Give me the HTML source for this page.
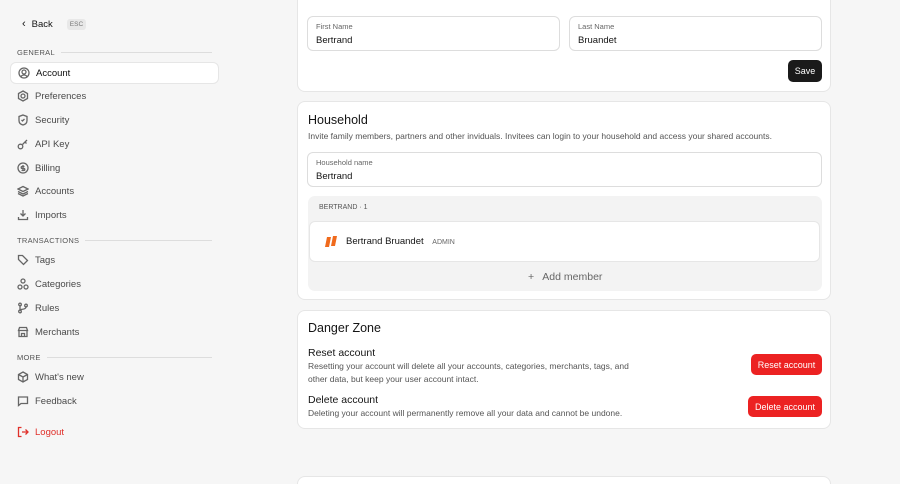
<!DOCTYPE html><html><head><style>
*{box-sizing:border-box;margin:0;padding:0}
html,body{width:900px;height:484px;overflow:hidden}
body{background:#f6f6f6;font-family:"Liberation Sans",sans-serif;color:#141414;position:relative}
.a{position:absolute}
.nav{left:10px;width:209px;height:22px;display:flex;align-items:center;padding-left:7px;font-size:9.5px;color:#4a4a4a;gap:6px}
.nav svg{width:12px;height:12px;stroke:#666;fill:none;stroke-width:1.3}
.sec{left:17px;font-size:7.5px;color:#555;letter-spacing:.3px;display:flex;align-items:center;width:195px;gap:6px}
.sec i{flex:1;height:1px;background:#ddd}
.card{left:297px;width:534px;background:#fff;border:1px solid #e6e6e6;border-radius:8px}
.inp{border:1px solid #ddd;border-radius:6px;background:#fff;height:35px;padding:5px 8px}
.inp small{display:block;font-size:7.5px;color:#666}
.inp b{display:block;font-weight:normal;font-size:9.5px;margin-top:4px}
.red{background:#ec2222;color:#fff;font-size:9px;border-radius:5px;height:21px;display:flex;align-items:center;justify-content:center}
h3{font-weight:normal;font-size:12.5px}
p{font-size:8.5px;color:#555;line-height:12.5px}
</style></head><body>
<div class="a" style="left:22px;top:18px;font-size:9.5px;display:flex;align-items:center;gap:6px"><span style="font-size:11px">‹</span>Back<span style="background:#e8e8e8;color:#777;font-size:6.5px;padding:2px 3px;border-radius:3px;margin-left:8px">ESC</span></div>
<div class="a sec" style="top:48px">GENERAL<i></i></div>
<div class="a nav" style="top:62px;background:#fff;border:1px solid #e6e6e6;border-radius:6px;color:#111"><svg viewBox="0 0 12 12"><circle cx="6" cy="6" r="5"/><circle cx="6" cy="5" r="2"/><path d="M3 9.5c1.5-2 4.5-2 6 0"/></svg>Account</div>
<div class="a nav" style="top:85px"><svg viewBox="0 0 12 12"><path d="M6 1l4.5 2.5v5L6 11 1.5 8.5v-5z"/><circle cx="6" cy="6" r="2"/></svg>Preferences</div>
<div class="a nav" style="top:109px"><svg viewBox="0 0 12 12"><path d="M6 1l4 1.5v4c0 2.5-2 4-4 4.5-2-.5-4-2-4-4.5v-4z"/><path d="M4.5 6l1 1 2-2"/></svg>Security</div>
<div class="a nav" style="top:133px"><svg viewBox="0 0 12 12"><circle cx="3.5" cy="8.5" r="2.3"/><path d="M5.5 6.5L10 2M8 4l1.5 1.5"/></svg>API Key</div>
<div class="a nav" style="top:157px"><svg viewBox="0 0 12 12"><circle cx="6" cy="6" r="5"/><path d="M6 3v6M7.5 4.5H5.2a1 1 0 000 2h1.6a1 1 0 010 2H4.5"/></svg>Billing</div>
<div class="a nav" style="top:180px"><svg viewBox="0 0 12 12"><path d="M6 1.5l5 2.5-5 2.5-5-2.5zM1 6.5l5 2.5 5-2.5M1 8.5l5 2.5 5-2.5"/></svg>Accounts</div>
<div class="a nav" style="top:204px"><svg viewBox="0 0 12 12"><path d="M6 1v6M3.5 4.5L6 7l2.5-2.5M1.5 8v2.5h9V8"/></svg>Imports</div>
<div class="a sec" style="top:236px">TRANSACTIONS<i></i></div>
<div class="a nav" style="top:249px"><svg viewBox="0 0 12 12"><path d="M1.5 1.5h4l5 5-4 4-5-5z"/></svg>Tags</div>
<div class="a nav" style="top:273px"><svg viewBox="0 0 12 12"><circle cx="6" cy="3" r="2"/><circle cx="3" cy="9" r="2"/><circle cx="9" cy="9" r="2"/></svg>Categories</div>
<div class="a nav" style="top:297px"><svg viewBox="0 0 12 12"><circle cx="3" cy="2.5" r="1.3"/><circle cx="3" cy="9.5" r="1.3"/><circle cx="9" cy="3.5" r="1.3"/><path d="M3 4v4M9 5c0 3-6 2-6 3"/></svg>Rules</div>
<div class="a nav" style="top:321px"><svg viewBox="0 0 12 12"><path d="M1.5 4.5L2.5 1.5h7l1 3zM2 4.5V10.5h8V4.5M4.5 10.5V7.5h3v3"/></svg>Merchants</div>
<div class="a sec" style="top:353px">MORE<i></i></div>
<div class="a nav" style="top:366px"><svg viewBox="0 0 12 12"><path d="M6 1l4.5 2.5v5L6 11 1.5 8.5v-5zM1.5 3.5L6 6l4.5-2.5M6 6v5"/></svg>What's new</div>
<div class="a nav" style="top:390px"><svg viewBox="0 0 12 12"><path d="M1.5 2h9v6.5H4L1.5 10.5z"/></svg>Feedback</div>
<div class="a nav" style="top:421px;color:#e0302a"><svg viewBox="0 0 12 12" style="stroke:#e0302a"><path d="M4.5 1.5h-3v9h3M5 6h6M8.5 3.5L11 6 8.5 8.5"/></svg>Logout</div>

<div class="a card" style="top:-10px;height:102px;border-top:none">
<div class="a inp" style="left:9px;top:26px;width:253px"><small>First Name</small><b>Bertrand</b></div>
<div class="a inp" style="left:271px;top:26px;width:253px"><small>Last Name</small><b>Bruandet</b></div>
<div class="a" style="left:490px;top:70px;width:34px;height:22px;background:#1a1a1a;color:#fff;border-radius:5px;font-size:9px;display:flex;align-items:center;justify-content:center">Save</div>
</div>
<div class="a card" style="top:101px;height:199px">
<h3 class="a" style="left:10px;top:11px">Household</h3>
<p class="a" style="left:10px;top:28px">Invite family members, partners and other inviduals. Invitees can login to your household and access your shared accounts.</p>
<div class="a inp" style="left:9px;top:50px;width:515px"><small>Household name</small><b>Bertrand</b></div>
<div class="a" style="left:10px;top:94px;width:514px;height:95px;background:#f3f3f3;border-radius:7px">
<div class="a" style="left:11px;top:8px;font-size:7px;color:#555">BERTRAND · 1</div>
<div class="a" style="left:1px;top:25px;width:511px;height:41px;background:#fff;border:1px solid #e6e6e6;border-radius:6px">
<svg class="a" style="left:14px;top:13px" width="14" height="13" viewBox="0 0 14 13"><path d="M3 2h4L5 12H1z" fill="#f06a1c"/><path d="M9 1h4l-2 10H7z" fill="#f06a1c"/></svg>
<div class="a" style="left:36px;top:14px;font-size:9.5px">Bertrand Bruandet <span style="font-size:7px;color:#666;margin-left:6px">ADMIN</span></div>
</div>
<div class="a" style="left:220px;top:75px;font-size:10.5px;color:#666">+&nbsp;&nbsp; Add member</div>
</div>
</div>
<div class="a card" style="top:310px;height:119px">
<h3 class="a" style="left:10px;top:10px">Danger Zone</h3>
<div class="a" style="left:10px;top:36px;font-size:10.5px">Reset account</div>
<p class="a" style="left:10px;top:49px;width:340px">Resetting your account will delete all your accounts, categories, merchants, tags, and other data, but keep your user account intact.</p>
<div class="a red" style="left:453px;top:43px;width:71px">Reset account</div>
<div class="a" style="left:10px;top:83px;font-size:10.5px">Delete account</div>
<p class="a" style="left:10px;top:96px">Deleting your account will permanently remove all your data and cannot be undone.</p>
<div class="a red" style="left:450px;top:85px;width:74px">Delete account</div>
</div>
<div class="a card" style="top:476px;height:8px;border-bottom:none;border-radius:8px 8px 0 0"></div>
</body></html>
